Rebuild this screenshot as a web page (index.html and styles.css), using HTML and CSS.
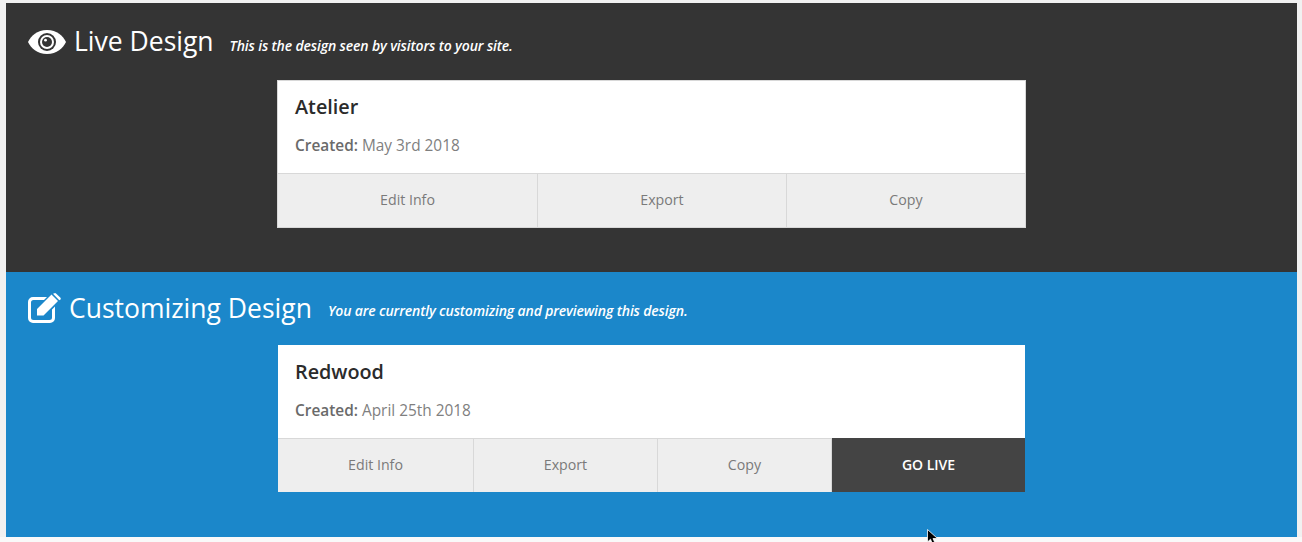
FILE: index.html
```html
<!DOCTYPE html>
<html lang="en">
<head>
<meta charset="utf-8">
<title>Designs</title>
<link rel="stylesheet" href="styles.css">
</head>
<body>
<main class="page">
  <section class="panel panel-live">
    <header class="panel-head">
      <svg class="icon icon-eye" viewBox="0 0 38 26" aria-hidden="true"><path d="M19 1C29 1 35 7 38 13 35 19 29 25 19 25 9 25 3 19 0 13 3 7 9 1 19 1Z"/><circle class="eye-dark" cx="19" cy="13" r="9"/><circle cx="19" cy="13" r="7"/><circle class="eye-dark" cx="19" cy="13" r="5"/><circle cx="17.500" cy="11.200" r="1.400"/></svg>
      <h2 class="panel-title">Live Design</h2>
      <p class="panel-note">This is the design seen by visitors to your site.</p>
    </header>
    <article class="card card-live">
      <div class="card-body">
        <h3 class="card-title">Atelier</h3>
        <p class="card-meta"><strong>Created:</strong> May 3rd 2018</p>
      </div>
      <div class="actions">
        <a class="action a-edit">Edit Info</a>
        <a class="action a-export">Export</a>
        <a class="action a-copy">Copy</a>
      </div>
    </article>
  </section>
  <section class="panel panel-custom">
    <header class="panel-head">
      <svg class="icon icon-edit" viewBox="0 0 33 30" aria-hidden="true"><path d="M5 4H19L16 7H5.500A2.500 2.500 0 0 0 3 9.500V24.500A2.500 2.500 0 0 0 5.500 27H21.500A2.500 2.500 0 0 0 24 24.500V16.500L27 13.500V25A5 5 0 0 1 22 30H5A5 5 0 0 1 0 25V9A5 5 0 0 1 5 4Z"/><path d="M9 16 23.500 1.500 30 8 15.500 22.500H9ZM25 .8 26.500 .2A1.500 1.500 0 0 1 28 .4L32.500 4.800A1.500 1.500 0 0 1 32.500 6.500L31.300 7.200Z"/></svg>
      <h2 class="panel-title">Customizing Design</h2>
      <p class="panel-note">You are currently customizing and previewing this design.</p>
    </header>
    <article class="card card-custom">
      <div class="card-body">
        <h3 class="card-title">Redwood</h3>
        <p class="card-meta"><strong>Created:</strong> April 25th 2018</p>
      </div>
      <div class="actions">
        <a class="action b-edit">Edit Info</a>
        <a class="action b-export">Export</a>
        <a class="action b-copy">Copy</a>
        <a class="action action-live">GO LIVE</a>
      </div>
    </article>
    <svg class="cursor" viewBox="0 0 12 16" aria-hidden="true"><path d="M.5 .5V13L3.500 10.200 5.500 15 8 14 6 9.500H10.500Z" fill="#000" stroke="#fff" stroke-width=".8"/></svg>
  </section>
  <div class="foot"></div>
</main>
</body>
</html>
```
FILE: styles.css
```css
html, body {
  margin: 0;
  padding: 0;
  height: 542px;
  overflow: hidden;
  background: #f1f1f1;
  font-family: "Open Sans", "Liberation Sans", sans-serif;
}
.page {
  padding: 3px 5px 0 6px;
  position: relative;
}
.panel {
  position: relative;
  display: flow-root;
  box-sizing: border-box;
}
.panel-live {
  height: 269px;
  background: #343434;
}
.panel-custom {
  height: 265px;
  background: #1b87ca;
}
.panel-head {
  display: flex;
  align-items: center;
  color: #fff;
  padding: 0 0 0 22px;
}
.panel-live .panel-head {
  height: 77px;
}
.panel-custom .panel-head {
  height: 73px;
}
.icon {
  fill: #fff;
  flex: none;
}
.eye-dark {
  fill: #343434;
}
.icon-eye {
  width: 38px;
  height: 26px;
  margin-right: 8px;
}
.icon-edit {
  width: 33px;
  height: 30px;
  margin-right: 8px;
  margin-top: -1px;
}
.panel-title {
  margin: -2px 16px 0 0;
  font-size: 26.500px;
  line-height: 36px;
  font-weight: 500;
}
.panel-note {
  margin: 5px 0 0;
  font-size: 14px;
  line-height: 20px;
  font-style: italic;
  font-weight: 600;
  letter-spacing: -0.14px;
}
.panel-live .panel-note {
  margin-top: 9px;
}
.card {
  background: #fff;
  box-sizing: border-box;
}
.card-live {
  margin-left: 271px;
  width: 749px;
  height: 148px;
  border: 1px solid #d8d8d8;
}
.card-custom {
  margin-left: 272px;
  width: 747px;
  height: 147px;
}
.card-body {
  height: 92px;
  box-sizing: border-box;
  padding: 12px 17px 0;
}
.card-custom .card-body {
  height: 93px;
  padding: 13px 17px 0;
}
.card-title {
  margin: 0;
  font-size: 19.800px;
  line-height: 28px;
  font-weight: 600;
  color: #2b2b2b;
}
.card-meta {
  margin: 14px 0 0;
  font-size: 15.400px;
  line-height: 22px;
  color: #7f7f7f;
}
.card-meta strong {
  font-size: 15.400px;
  font-weight: 600;
  color: #6a6a6a;
}
.actions {
  display: flex;
  height: 54px;
  background: #eee;
  border-top: 1px solid #d8d8d8;
  box-sizing: border-box;
}
.action {
  display: flex;
  align-items: center;
  justify-content: center;
  box-sizing: border-box;
  padding-bottom: 2px;
  font-size: 14.200px;
  color: #7a7a7a;
  border-right: 1px solid #d8d8d8;
}
.a-edit { width: 260px; }
.a-export { width: 249px; }
.a-copy { flex: 1; border-right: 0; }
.b-edit { width: 196px; }
.b-export { width: 184px; }
.b-copy { width: 174px; }
.action-live {
  flex: 1;
  border-right: 0;
  margin-top: -1px;
  background: #444;
  color: #fff;
  font-size: 14px;
  font-weight: 600;
}
.cursor {
  position: absolute;
  left: 921px;
  top: 257px;
  width: 12px;
  height: 16px;
  z-index: 2;
}
.foot {
  height: 5px;
  margin: 0 -5px 0 -6px;
  background: #f9f9f9;
}
```
